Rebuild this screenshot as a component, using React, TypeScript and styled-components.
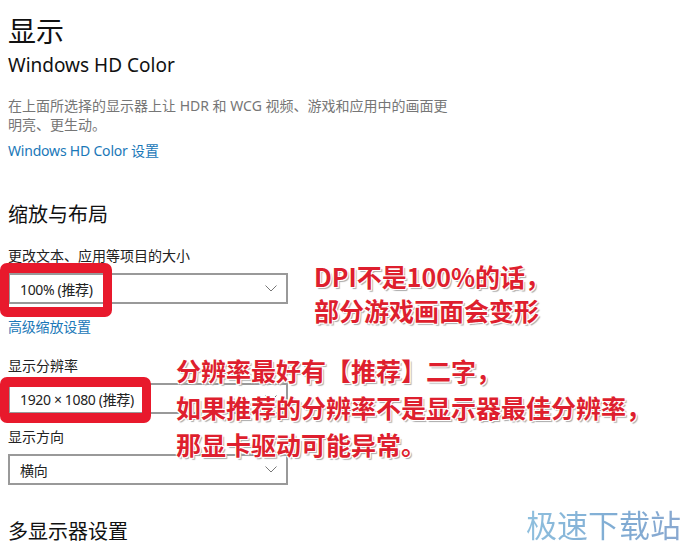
import React from 'react';
import styled, { createGlobalStyle } from 'styled-components';

const uiFont = '"Noto Sans", "Noto Sans CJK SC", sans-serif';

const GlobalStyle = createGlobalStyle`
  html, body {
    margin: 0;
    padding: 0;
    background: #fff;
  }
  body {
    font-family: ${uiFont};
    overflow: hidden;
  }
`;

const Page = styled.div`
  position: relative;
  width: 700px;
  height: 554px;
  overflow: hidden;
  padding: 13px 0 0 8px;
  box-sizing: border-box;
  background: #fff;
`;

const Title = styled.h1`
  margin: 0;
  font-size: 28px;
  line-height: 36px;
  font-weight: 400;
  color: #111;
`;

const SubTitle = styled.h2`
  margin: 2px 0 0;
  font-size: 19px;
  line-height: 28px;
  font-weight: 400;
  color: #111;
`;

const Description = styled.p`
  margin: 17px 0 0;
  width: 445px;
  font-size: 14px;
  line-height: 19px;
  color: #767676;
`;

const TextLink = styled.a<{ $top: number }>`
  display: block;
  margin-top: ${(p) => p.$top}px;
  font-size: 14px;
  line-height: 20px;
  letter-spacing: -0.2px;
  color: #1a78b8;
`;

const SectionHeading = styled.h3<{ $top: number }>`
  margin: ${(p) => p.$top}px 0 0;
  font-size: 20px;
  line-height: 28px;
  font-weight: 400;
  color: #111;
`;

const FieldLabel = styled.div<{ $top: number }>`
  margin-top: ${(p) => p.$top}px;
  font-size: 14px;
  line-height: 20px;
  color: #222;
`;

const SelectBox = styled.div`
  display: flex;
  align-items: center;
  justify-content: space-between;
  width: 280px;
  height: 31px;
  margin-top: 7px;
  padding: 0 9px 0 10px;
  box-sizing: border-box;
  border: 2px solid #999;
  font-size: 14px;
  letter-spacing: -0.35px;
  color: #222;
`;

const Chevron = () => (
  <svg width="12" height="7" viewBox="0 0 12 7" fill="none">
    <path d="M0.5 0.5 L6 6 L11.5 0.5" stroke="#777" strokeWidth="1" />
  </svg>
);

const RedFrame = styled.div<{ $left: number; $top: number; $width: number; $height: number }>`
  position: absolute;
  left: ${(p) => p.$left}px;
  top: ${(p) => p.$top}px;
  width: ${(p) => p.$width}px;
  height: ${(p) => p.$height}px;
  box-sizing: border-box;
  border: 9px solid #e8192c;
  border-width: 10px 9px;
  border-radius: 7px;
`;

const Callout = styled.div<{ $left: number; $top: number; $line: number; $size: number }>`
  position: absolute;
  left: ${(p) => p.$left}px;
  top: ${(p) => p.$top}px;
  white-space: nowrap;
  font-family: "Noto Sans CJK SC", sans-serif;
  font-weight: 700;
  font-size: ${(p) => p.$size}px;
  line-height: ${(p) => p.$line}px;
  color: #de1f2e;
  text-shadow:
    -1px -1px 0 #fff, 1px -1px 0 #fff, -1px 1px 0 #fff, 1px 1px 0 #fff,
    2px 2px 1px #aaa;
`;

const Watermark = styled.div`
  position: absolute;
  left: 526px;
  top: 503px;
  font-family: "Noto Sans CJK SC", sans-serif;
  font-size: 31px;
  line-height: 42px;
  white-space: nowrap;
  color: transparent;
  background: linear-gradient(100deg, #8fc0de 0%, #7fabd3 60%, #8aa8d0 100%);
  -webkit-background-clip: text;
  background-clip: text;
`;

const App: React.FunctionComponent = () => (
  <Page>
    <GlobalStyle />
    <Title>显示</Title>
    <SubTitle>Windows HD Color</SubTitle>
    <Description>在上面所选择的显示器上让 HDR 和 WCG 视频、游戏和应用中的画面更明亮、更生动。</Description>
    <TextLink $top={7}>Windows HD Color 设置</TextLink>
    <SectionHeading $top={40}>缩放与布局</SectionHeading>
    <FieldLabel $top={17}>更改文本、应用等项目的大小</FieldLabel>
    <SelectBox>
      100% (推荐)
      <Chevron />
    </SelectBox>
    <TextLink $top={13}>高级缩放设置</TextLink>
    <FieldLabel $top={19}>显示分辨率</FieldLabel>
    <SelectBox>
      1920 × 1080 (推荐)
      <Chevron />
    </SelectBox>
    <FieldLabel $top={13}>显示方向</FieldLabel>
    <SelectBox>
      横向
      <Chevron />
    </SelectBox>
    <SectionHeading $top={33}>多显示器设置</SectionHeading>

    <RedFrame $left={0} $top={263} $width={112} $height={54} />
    <RedFrame $left={0} $top={377} $width={151} $height={46} />
    <Callout $left={314} $top={259} $line={34} $size={25}>
      DPI不是100%的话，
      <br />
      部分游戏画面会变形
    </Callout>
    <Callout $left={176} $top={352} $line={37} $size={25}>
      分辨率最好有【推荐】二字，
      <br />
      如果推荐的分辨率不是显示器最佳分辨率，
      <br />
      那显卡驱动可能异常。
    </Callout>
    <Watermark>极速下载站</Watermark>
  </Page>
);

export default App;
